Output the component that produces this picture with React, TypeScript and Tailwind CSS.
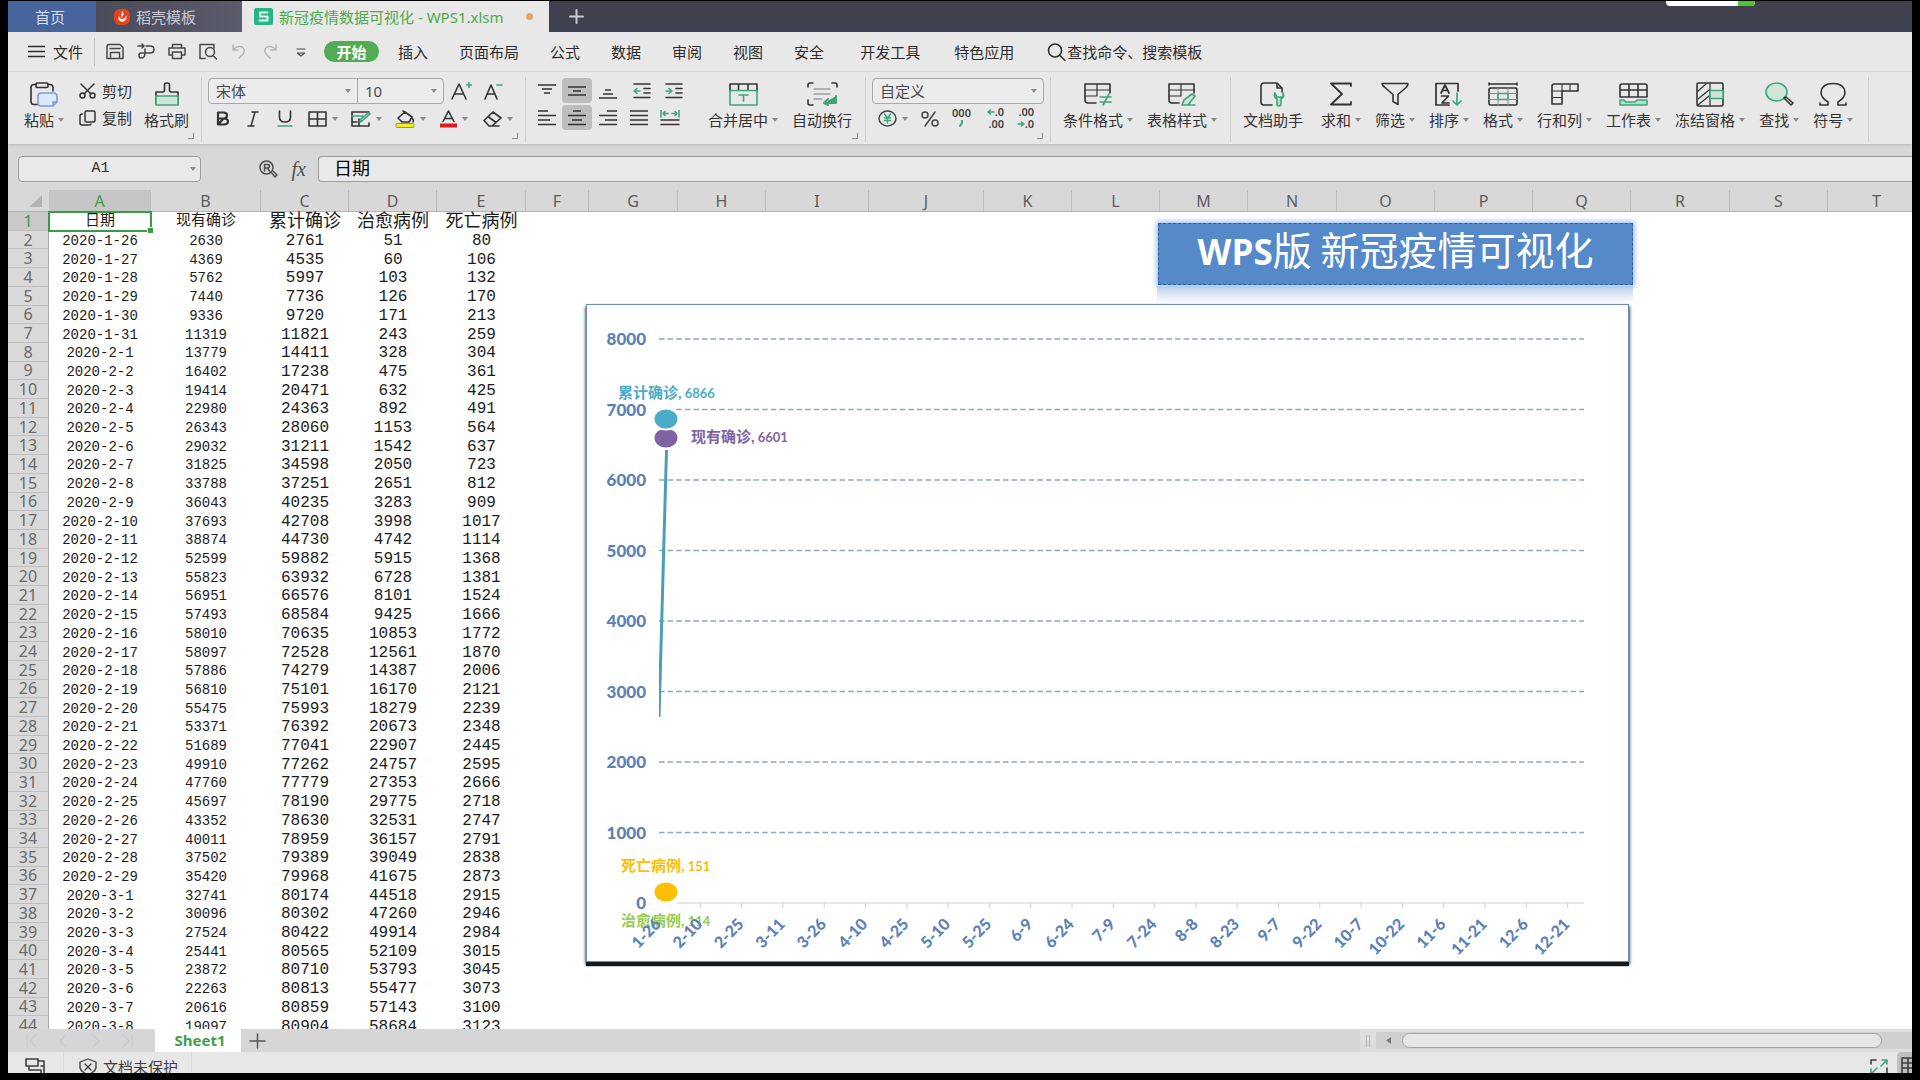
import React from "react";

type Kids = { children?: React.ReactNode };

const UI = "font-['Noto_Sans','Noto_Sans_CJK_SC',sans-serif]";

function Svg({ w, h, sw = 1.6, children }: Kids & { w: number; h: number; sw?: number }) {
  return (
    <svg
      width={w}
      height={h}
      viewBox={`0 0 ${w} ${h}`}
      fill="none"
      stroke="currentColor"
      strokeWidth={sw}
      strokeLinecap="round"
      strokeLinejoin="round"
      aria-hidden="true"
      className="shrink-0"
    >
      {children}
    </svg>
  );
}

const G = "#3fa67c";

function Caret() {
  return (
    <svg width="6" height="4" viewBox="0 0 6 4" className="shrink-0" aria-hidden="true">
      <path d="M0 0h6L3 4z" fill="#8a8a8a" />
    </svg>
  );
}

/* ---------- title tabs ---------- */

function TabBar() {
  return (
    <header className="relative flex h-[31px] shrink-0 bg-linear-to-b from-[#423f4c] to-[#3e4150] text-[15px] leading-[20px]">
      <button className="w-[88px] bg-[#47649c] pr-1 text-[#d4dcec]">首页</button>
      <button className="flex w-[146px] items-center gap-[6px] bg-linear-to-r from-[#4b4c5a] to-[#5a5b6b] pl-[18px] text-[#c9cad4]">
        <Svg w={16} h={16}>
          <rect x="0" y="0" width="16" height="16" rx="6" fill="#e8421c" stroke="none" />
          <path d="M8 2c2 2 2 4 0 6l-1 2M12 6c2 5-3 8-6 6-2-1-2-3-1-5 1 3 2 3 3 3 2 0 4-1 4-4z" fill="#fff" stroke="none" />
        </Svg>
        稻壳模板
      </button>
      <button className="flex w-[307px] items-center bg-[#e8e8e8] pl-3 text-[#4cab4f]">
        <Svg w={19} h={17} sw={2}>
          <rect width="19" height="17" rx="2" fill="#27b486" stroke="none" />
          <path d="M13.500 4.500H6v4h7.500v4H5.500" stroke="#e8fff6" />
        </Svg>
        <span className="pl-[6px] whitespace-nowrap">新冠疫情数据可视化 - WPS1.xlsm</span>
        <span className="mr-[16px] ml-auto size-[7px] rounded-full bg-[#e5a466]" />
      </button>
      <button aria-label="新建标签" className="w-14 pl-[20px] text-[#c9cad4]">
        <Svg w={15} h={15} sw={2}>
          <path d="M7.500 1v13M1 7.500h13" />
        </Svg>
      </button>
      <div className="absolute top-0 right-[157px] flex h-[5px] w-[89px] overflow-hidden rounded-b bg-white">
        <span className="ml-auto w-[17px] bg-[#4fc52c]" />
      </div>
    </header>
  );
}

/* ---------- menu ---------- */

const QUICK: { name: string; dim?: boolean; art: React.ReactNode }[] = [
  {
    name: "保存",
    art: <path d="M1 3.500Q1 1.500 3 1.500H14L17 4.500V15.500H1zM4 5.500H14M4.500 15V9.500H13.500V15" />,
  },
  {
    name: "输出为PDF",
    art: <path d="M1 3h6M5 1l2 2-2 2M9 3h4q4 0 4 3.500T13 10H4q-2 0-2 2.500T4 15q4 0 4-5V6" />,
  },
  { name: "打印", art: <path d="M4.500 5V1.500h9V5M4.500 12H1V5h16v7h-3.500M4.500 9h9v6.500h-9z" /> },
  {
    name: "打印预览",
    art: (
      <>
        <path d="M6 15.500H1v-14h14V5" />
        <circle cx="11" cy="9" r="4.500" />
        <path d="M14 12.500l3.500 3.500" />
      </>
    ),
  },
  { name: "撤销", dim: true, art: <path d="M3 2v5h5M3 7q4-5 9-3 4 3 1 7l-4 4" /> },
  { name: "恢复", dim: true, art: <path d="M15 2v5h-5M15 7q-4-5-9-3-4 3-1 7l4 4" /> },
  { name: "更多", art: <path d="M5 6h8M5.500 10h7L9 13z" strokeWidth="1.2" /> },
];

const MENUS = ["插入", "页面布局", "公式", "数据", "审阅", "视图", "安全"];

function MenuBar() {
  return (
    <nav className="flex h-10 shrink-0 items-center border-b border-[#dcdcdc] bg-[#e8e8e8] text-[15px] leading-[20px] text-[#2c2c2c]">
      <button className="ml-5 flex h-7 items-center gap-2 border-r border-[#c6c6c6] pr-[11px]">
        <Svg w={17} h={13} sw={1.500}>
          <path d="M0 1.500h17M0 6.500h17M0 11.500h17" />
        </Svg>
        文件
      </button>
      <div className="flex gap-[13px] pl-[11px]">
        {QUICK.map((q) => (
          <button key={q.name} aria-label={q.name} className={q.dim ? "text-[#b5b5b5]" : "text-[#474747]"}>
            <Svg w={18} h={17} sw={1.500}>
              {q.art}
            </Svg>
          </button>
        ))}
      </div>
      <button className="mr-[19px] ml-[14px] h-[21px] w-[55px] rounded-full bg-[#53ab54] font-bold text-white">开始</button>
      <div className="flex gap-[31px]">
        {MENUS.map((m) => (
          <button key={m}>{m}</button>
        ))}
      </div>
      <button className="ml-9">开发工具</button>
      <button className="ml-[34px]">特色应用</button>
      <button className="ml-[33px] flex items-center">
        <Svg w={20} h={18} sw={1.500}>
          <circle cx="8" cy="7.500" r="6.500" />
          <path d="M13 12.500l5 5" />
        </Svg>
        查找命令、搜索模板
      </button>
    </nav>
  );
}

/* ---------- ribbon ---------- */

function Big({ label, caret = true, children }: Kids & { label: string; caret?: boolean }) {
  return (
    <button className="flex flex-col items-center">
      <span className="flex h-[32px] items-center">{children}</span>
      <span className="flex h-[20px] items-center gap-1 whitespace-nowrap">
        {label}
        {caret && <Caret />}
      </span>
    </button>
  );
}

function Group({ className, corner = false, children }: Kids & { className: string; corner?: boolean }) {
  return (
    <div className={`relative flex h-[65px] shrink-0 border-r border-[#cfcfcf] pt-px ${className}`}>
      {children}
      {corner && (
        <span className="absolute right-[7px] bottom-[3px] size-[6px] border-r border-b border-[#8f8f8f]" aria-hidden="true" />
      )}
    </div>
  );
}

function Small({ label, on = false, caret = false, className, children }: Kids & { label: string; on?: boolean; caret?: boolean; className: string }) {
  return (
    <button
      aria-label={label}
      className={`flex h-[25px] shrink-0 items-center justify-center gap-[5px] ${on ? "rounded bg-[#bdbdbd]" : ""} ${className}`}
    >
      {children}
      {caret && <Caret />}
    </button>
  );
}

function Combo({ label, value, className }: { label: string; value: string; className: string }) {
  return (
    <label className={`flex h-[24px] items-center pr-[6px] pl-[7px] ${className}`}>
      <select aria-label={label} defaultValue={value} className="min-w-0 flex-1 appearance-none bg-transparent text-[#4a4a4a] outline-none">
        <option>{value}</option>
      </select>
      <Caret />
    </label>
  );
}

function Lines({ d }: { d: string }) {
  return (
    <Svg w={18} h={16} sw={1.600}>
      <path d={d} strokeLinecap="butt" />
    </Svg>
  );
}

function Ribbon() {
  return (
    <section
      aria-label="开始"
      className="z-10 flex h-[72px] shrink-0 overflow-hidden bg-[#e8e8e8] pt-[5px] text-[15px] leading-[20px] text-[#333] shadow-[0_1px_3px_#b5b5b5]"
    >
      <Group className="w-[194px] pl-4" corner>
        <Big label="粘贴">
          <Svg w={28} h={25}>
            <path d="M9 22.500H4q-3 0-3-3V5.500q0-3 3-3h2M18 2.500h2q3 0 3 3V9" />
            <rect x="6" y="1" width="12" height="4.500" rx="1" />
            <path d="M11 11h14l2 2v7l-4 4H11q-3 0-3-3v-7q0-3 3-3z" fill="#dbe8fa" stroke="#7e9ed0" />
            <path d="M23 24v-4h4" stroke="#7e9ed0" />
          </Svg>
        </Big>
        <div className="flex w-[75px] flex-col gap-[2px] pl-[15px]">
          <button className="flex h-[25px] items-center gap-[6px]">
            <Svg w={17} h={16} sw={1.500}>
              <path d="M2 1l10 10M15 1L5 11" />
              <circle cx="3.500" cy="12.500" r="2.500" />
              <circle cx="13.500" cy="12.500" r="2.500" />
            </Svg>
            剪切
          </button>
          <button className="flex h-[25px] items-center gap-[6px]">
            <Svg w={17} h={16} sw={1.500}>
              <rect x="6" y="1" width="10" height="11" rx="1.500" />
              <path d="M3.500 4H3q-2 0-2 2v7q0 2 2 2h7q2 0 2-1" />
            </Svg>
            复制
          </button>
        </div>
        <div className="pl-[5px]">
          <Big label="格式刷" caret={false}>
            <Svg w={26} h={24}>
              <path d="M2 22V10h7q1.500 0 1.500-2V2.500q0-1.500 2.500-1.500t2.500 1.500V8q0 2 1.500 2H24v12" />
              <path d="M2 14h22v9H2z" fill="#cfe5da" stroke={G} />
            </Svg>
          </Big>
        </div>
      </Group>

      <Group className="w-[324px] flex-col gap-[2px] pl-[6px]" corner>
        <div className="flex items-center">
          <div className="flex rounded-[4px] border border-[#a9a9a9] bg-[#ececec]">
            <Combo label="字体" value="宋体" className="w-[149px] border-r border-[#a9a9a9]" />
            <Combo label="字号" value="10" className="w-[85px]" />
          </div>
          <Small label="增大字号" className="w-[34px]">
            <Svg w={21} h={20}>
              <path d="M1 18L8 3l7 15M3.500 13h9" />
              <path d="M18 1.500v5M15.500 4h5" stroke={G} />
            </Svg>
          </Small>
          <Small label="减小字号" className="w-[30px]">
            <Svg w={19} h={20}>
              <path d="M1 18L7 4l6 14M3 13h8" />
              <path d="M13 4h5" stroke={G} />
            </Svg>
          </Small>
        </div>
        <div className="flex">
          <Small label="加粗" className="w-[29px]">
            <Svg w={14} h={15} sw={2.200}>
              <path d="M2 1.500h5.500q3.500 0 3.500 3T7.500 7.500H2M7.500 7.500q4.500 0 4.500 3t-4.500 3H2zM2 1.500v12" />
            </Svg>
          </Small>
          <Small label="倾斜" className="w-[32px]">
            <Svg w={12} h={16} sw={1.500}>
              <path d="M5 1h6M1 15h6M8 1L4 15" />
            </Svg>
          </Small>
          <Small label="下划线" className="w-[31px]">
            <Svg w={16} h={17}>
              <path d="M2.500 1v6q0 5 5.500 5t5.500-5V1" />
              <path d="M1 16h14" stroke={G} />
            </Svg>
          </Small>
          <Small label="边框" caret className="w-[45px]">
            <Svg w={19} h={16}>
              <path d="M1 1h17v14H1zM9.500 1v14M1 8h17" />
            </Svg>
          </Small>
          <Small label="绘图边框" caret className="w-[42px]">
            <Svg w={20} h={16}>
              <path d="M18 1H1v14h17v-3M8 8v7M1 11h5" />
              <path d="M1 5h11M9 11l2-1 8-7-2-1-7 6z" stroke={G} fill="#a8d3bf" />
            </Svg>
          </Small>
          <Small label="填充颜色" caret className="w-[46px]">
            <Svg w={20} h={18}>
              <path d="M3 8l7-6 7 5-3 5H7zM17 8q2 2 1 4M10 2L8 1" />
              <rect x="1" y="13.500" width="18" height="4" rx="1" fill="#f4ee1d" stroke="#9a9640" strokeWidth="1" />
            </Svg>
          </Small>
          <Small label="字体颜色" caret className="w-[42px]">
            <Svg w={17} h={18}>
              <path d="M3 11.500L8.500 1 14 11.500M5 8.500h7" />
              <rect x="0" y="13.500" width="17" height="4" fill="#dd1d20" stroke="none" />
            </Svg>
          </Small>
          <Small label="清除" caret className="w-[46px]">
            <Svg w={19} h={16}>
              <path d="M1 9.500L10 1l8 6-9 8H6zM5 5.500l8 6M9 15h7" />
            </Svg>
          </Small>
        </div>
      </Group>

      <Group className="w-[340px] pl-[5px]" corner>
        <div className="flex flex-col gap-[2px]">
          <div className="flex items-center">
            <Small label="顶端对齐" className="w-[31px]"><Lines d="M0 2h18M4 6h10M6 10h6" /></Small>
            <Small label="垂直居中" on className="w-[30px]"><Lines d="M0 4h18M5 8h8M0 12h18" /></Small>
            <Small label="底端对齐" className="w-[32px]"><Lines d="M6 7h6M4 11h10M0 15h18" /></Small>
            <Small label="减少缩进" className="w-[36px]">
              <Svg w={18} h={16}>
                <path d="M1 1h16M11 5.500h6M11 10h6M1 14.500h16" />
                <path d="M1 8h6M4 5.500L1 8l3 2.500" stroke={G} />
              </Svg>
            </Small>
            <Small label="增加缩进" className="w-[28px]">
              <Svg w={18} h={16}>
                <path d="M1 1h16M11 5.500h6M11 10h6M1 14.500h16" />
                <path d="M1 8h6M4 5.500L7 8l-3 2.500" stroke={G} />
              </Svg>
            </Small>
          </div>
          <div className="flex items-center">
            <Small label="左对齐" className="w-[31px]"><Lines d="M0 1h10M0 5.500h18M0 10h12M0 14.500h18" /></Small>
            <Small label="水平居中" on className="w-[30px]"><Lines d="M5 1h8M0 5.500h18M4 10h10M0 14.500h18" /></Small>
            <Small label="右对齐" className="w-[32px]"><Lines d="M8 1h10M0 5.500h18M6 10h12M0 14.500h18" /></Small>
            <Small label="两端对齐" className="w-[30px]"><Lines d="M0 1h18M0 5.500h18M0 10h18M0 14.500h18" /></Small>
            <Small label="分散对齐" className="w-[32px]">
              <Svg w={20} h={16}>
                <path d="M1 10h18M1 14.500h18" />
                <path d="M1 0v7M19 0v7M3 3.500h5M12 3.500h5M5 1.500l-2 2 2 2M15 1.500l2 2-2 2" stroke={G} />
              </Svg>
            </Small>
          </div>
        </div>
        <div className="flex gap-[14px] pl-5">
          <Big label="合并居中">
            <Svg w={29} h={24}>
              <path d="M1 9V2h27v7M9.500 2v6M19 2v6" />
              <path d="M1 8.500h27V23H1zM10 13h9M14.500 13v6" stroke={G} />
            </Svg>
          </Big>
          <Big label="自动换行" caret={false}>
            <Svg w={31} h={24}>
              <path d="M1 5V3q0-2 2-2h3M25 1h3q2 0 2 2v2M1 18v3q0 2 2 2h3" />
              <path d="M7 7h16M7 12h16M7 17h8" strokeWidth="1.2" stroke="#777" />
              <path d="M29 14v7H17M21 17l-4 4 4 2" stroke={G} strokeWidth="2" fill={G} />
            </Svg>
          </Big>
        </div>
      </Group>

      <Group className="w-[185px] flex-col gap-[2px] pl-[6px]" corner>
        <div className="flex w-[172px] rounded-[4px] border border-[#a9a9a9] bg-[#ececec]">
          <Combo label="数字格式" value="自定义" className="flex-1" />
        </div>
        <div className="flex items-center text-[#444]">
          <Small label="货币格式" caret className="w-[42px]">
            <Svg w={19} h={17} sw={1.500}>
              <ellipse cx="9.500" cy="8.500" rx="8.500" ry="7.500" />
              <path d="M6.500 4l3 4 3-4M9.500 8v5M6.500 8h6M6.500 10.500h6" stroke={G} />
            </Svg>
          </Small>
          <Small label="百分比" className="w-[32px]">
            <Svg w={18} h={16} sw={1.500}>
              <circle cx="4" cy="4" r="3" />
              <circle cx="14" cy="12" r="3" />
              <path d="M14 1L4 15" />
            </Svg>
          </Small>
          <button aria-label="千位分隔" className="flex h-[25px] w-[31px] flex-col items-center text-[11px] leading-[14px] font-semibold">
            000
            <Svg w={5} h={7} sw={2}>
              <path d="M3 0v3L1 6" stroke={G} />
            </Svg>
          </button>
          <button className="flex h-[25px] w-[28px] flex-col items-end pr-[1px] text-[11px] leading-[12px] font-semibold">
            <span className="flex items-center">
              <Svg w={8} h={6}>
                <path d="M7 3H1M3.500 1L1 3l2.500 2" stroke={G} />
              </Svg>
              .0
            </span>
            <span>.00</span>
          </button>
          <button className="flex h-[25px] w-[30px] flex-col items-end pr-[1px] text-[11px] leading-[12px] font-semibold">
            <span>.00</span>
            <span className="flex items-center">
              <Svg w={8} h={6}>
                <path d="M1 3h6M4.500 1L7 3 4.500 5" stroke={G} />
              </Svg>
              .0
            </span>
          </button>
        </div>
      </Group>

      <Group className="w-[180px] gap-[14px] pl-[12px]">
        <Big label="条件格式">
          <Svg w={28} h={24}>
            <path d="M12 21H4q-3 0-3-3V2h25v9" />
            <path d="M1 8h25M1 14h12M13 2v12" strokeWidth="1.200" />
            <path d="M16 15h11M16 20h11M25 12l-6 11" stroke={G} />
          </Svg>
        </Big>
        <Big label="表格样式">
          <Svg w={28} h={24}>
            <path d="M11 21H4q-3 0-3-3V2h25v9" />
            <path d="M1 8h25M1 14h12M13 2v12" strokeWidth="1.200" />
            <path d="M14 23l2-5 8-6 3 2-7 9zM15 23h12" stroke={G} fill="#cfe5da" />
          </Svg>
        </Big>
      </Group>

      <Group className="w-[638px] gap-[14px] pl-3" >
        <div className="mr-1 flex">
          <Big label="文档助手" caret={false}>
            <Svg w={26} h={25}>
              <path d="M12 23H4q-3 0-3-3V4q0-3 3-3h13l5 5v4M17 1v5h5" />
              <path d="M15 11q-2 4 2 6v6q2 2 4 0v-6q4-2 2-6v4h-6z" stroke={G} fill="#b6dccb" />
            </Svg>
          </Big>
        </div>
        <Big label="求和">
          <Svg w={24} h={24} sw={1.800}>
            <path d="M22 4V1.500H2L13 12 2 22.500h20V20" />
          </Svg>
        </Big>
        <Big label="筛选">
          <Svg w={28} h={24}>
            <path d="M1 1.500h26q0 2-2 4l-8 7v10l-5-3v-7l-8-7q-3-2-3-4z" />
          </Svg>
        </Big>
        <Big label="排序">
          <Svg w={28} h={25} sw={1.700}>
            <path d="M14 23H1V1.500h22V9" />
            <path d="M6 11l4-8 4 8M7.500 8.500h5M6.500 14h7L7 21h7" />
            <path d="M22 11v12M18 19l4 4 4-4" stroke={G} />
          </Svg>
        </Big>
        <Big label="格式">
          <Svg w={30} h={24}>
            <path d="M1 1v2M29 1v2M1 2h28" />
            <rect x="1" y="6" width="28" height="17" rx="1.500" />
            <path d="M1 11.500h28M1 17.500h28M10 6v17M20 6v17" strokeWidth="1" stroke="#888" />
            <path d="M10 11.500h10v6H10z" stroke={G} fill="#e8e8e8" />
          </Svg>
        </Big>
        <Big label="行和列">
          <Svg w={28} h={24}>
            <path d="M3 2h24v7H11v13H1V4q0-2 2-2z" />
            <path d="M11 2v7M19 2v7M1 9h10M1 15.500h10" strokeWidth="1.100" />
          </Svg>
        </Big>
        <Big label="工作表">
          <Svg w={29} h={24}>
            <path d="M1 15V4q0-2 2-2h23q2 0 2 2v11zM10 2v13M19 2v13M1 8h27" />
            <path d="M1 18h4l2 2h9l2-2h10v5H1z" stroke={G} fill="#b6dccb" />
          </Svg>
        </Big>
        <Big label="冻结窗格">
          <Svg w={28} h={25}>
            <rect x="1" y="1" width="26" height="23" rx="1.500" />
            <path d="M14 1v23M2 9l8-7M2 17l11-9M2 23l11-9" strokeWidth="1.200" />
            <path d="M14 8.500h13v8H14z" stroke={G} fill="#cfe5da" />
          </Svg>
        </Big>
        <Big label="查找">
          <Svg w={29} h={25}>
            <ellipse cx="11.500" cy="10" rx="10.500" ry="9" fill="#cfe5da" stroke={G} />
            <path d="M19 16l7 7 2-2-7-6z" />
          </Svg>
        </Big>
        <Big label="符号">
          <Svg w={28} h={25}>
            <path d="M1 21v2h8v-3q-7-4-7-10Q3 1.500 14 1.500T26 10q0 6-7 10v3h8v-2" />
          </Svg>
        </Big>
      </Group>
    </section>
  );
}

/* ---------- formula bar ---------- */

function FormulaBar() {
  return (
    <section className="flex h-[46px] shrink-0 items-center bg-[#d8d8d8] pt-[3px] pl-[10px]">
      <label className="flex h-[26px] w-[183px] items-center rounded-[4px] border border-[#9d9d9d] bg-[#e9e9e9] pr-1">
        <input
          aria-label="名称框"
          defaultValue="A1"
          className="h-5 min-w-0 flex-1 bg-transparent pt-[2px] pr-4 pl-2 text-center font-['Liberation_Mono',monospace] text-[15px] text-[#333] outline-none"
        />
        <Caret />
      </label>
      <div className="flex flex-1 items-center justify-end gap-[14px] pr-[12px] text-[#4f4f4f]">
        <button aria-label="查找">
          <Svg w={20} h={18} sw={1.500}>
            <circle cx="8.500" cy="7.500" r="6.500" />
            <path d="M6.500 11V4.500h3q2 0 2 1.700t-2 1.800h-3M9.500 8l2 3M13 12l4 5 2-2-4-4" />
          </Svg>
        </button>
        <button className="font-['Liberation_Serif',serif] text-[20px] leading-[24px] italic">fx</button>
      </div>
      <input
        aria-label="编辑栏"
        defaultValue="日期"
        className="h-[26px] w-[1594px] shrink-0 rounded-l-[4px] border border-r-0 border-[#9d9d9d] bg-[#e9e9e9] pl-[15px] text-[18px] text-black outline-none"
      />
    </section>
  );
}

/* ---------- worksheet ---------- */

const COLS: [string, string][] = [
  ["A", "w-[102px]"], ["B", "w-[110px]"], ["C", "w-[88px]"], ["D", "w-[88px]"], ["E", "w-[89px]"],
  ["F", "w-[63px]"], ["G", "w-[89px]"], ["H", "w-[88px]"], ["I", "w-[103px]"], ["J", "w-[115px]"],
  ["K", "w-[88px]"], ["L", "w-[88px]"], ["M", "w-[88px]"], ["N", "w-[89px]"], ["O", "w-[98px]"],
  ["P", "w-[98px]"], ["Q", "w-[98px]"], ["R", "w-[99px]"], ["S", "w-[98px]"], ["T", "w-[98px]"],
];

const DATA = `2020-1-26 2630 2761 51 80
2020-1-27 4369 4535 60 106
2020-1-28 5762 5997 103 132
2020-1-29 7440 7736 126 170
2020-1-30 9336 9720 171 213
2020-1-31 11319 11821 243 259
2020-2-1 13779 14411 328 304
2020-2-2 16402 17238 475 361
2020-2-3 19414 20471 632 425
2020-2-4 22980 24363 892 491
2020-2-5 26343 28060 1153 564
2020-2-6 29032 31211 1542 637
2020-2-7 31825 34598 2050 723
2020-2-8 33788 37251 2651 812
2020-2-9 36043 40235 3283 909
2020-2-10 37693 42708 3998 1017
2020-2-11 38874 44730 4742 1114
2020-2-12 52599 59882 5915 1368
2020-2-13 55823 63932 6728 1381
2020-2-14 56951 66576 8101 1524
2020-2-15 57493 68584 9425 1666
2020-2-16 58010 70635 10853 1772
2020-2-17 58097 72528 12561 1870
2020-2-18 57886 74279 14387 2006
2020-2-19 56810 75101 16170 2121
2020-2-20 55475 75993 18279 2239
2020-2-21 53371 76392 20673 2348
2020-2-22 51689 77041 22907 2445
2020-2-23 49910 77262 24757 2595
2020-2-24 47760 77779 27353 2666
2020-2-25 45697 78190 29775 2718
2020-2-26 43352 78630 32531 2747
2020-2-27 40011 78959 36157 2791
2020-2-28 37502 79389 39049 2838
2020-2-29 35420 79968 41675 2873
2020-3-1 32741 80174 44518 2915
2020-3-2 30096 80302 47260 2946
2020-3-3 27524 80422 49914 2984
2020-3-4 25441 80565 52109 3015
2020-3-5 23872 80710 53793 3045
2020-3-6 22263 80813 55477 3073
2020-3-7 20616 80859 57143 3100
2020-3-8 19097 80904 58684 3123`
  .split("\n")
  .map((r) => r.split(" "));

const HEADS = ["日期", "现有确诊", "累计确诊", "治愈病例", "死亡病例"];

function Grid() {
  return (
    <table className="h-[845px] w-[1918px] table-fixed border-separate border-spacing-0 text-center leading-[16px] whitespace-nowrap">
      <colgroup>
        <col className="w-[41px]" />
        {COLS.map(([c, w]) => (
          <col key={c} className={w} />
        ))}
      </colgroup>
      <thead>
        <tr className="h-[22px] bg-[#d8d8d8] text-[16px] text-[#5c5c5c]">
          <th scope="col" aria-label="全选" className="border-b border-[#b4b4b4] p-0">
            <svg width="13" height="12" viewBox="0 0 13 12" className="mr-[7px] ml-auto" aria-hidden="true">
              <path d="M13 0v12H0z" fill="#b3b3b3" />
            </svg>
          </th>
          {COLS.map(([c]) => (
            <th
              key={c}
              scope="col"
              className={`border-r border-b border-r-[#bdbdbd] border-b-[#b4b4b4] p-0 font-normal ${c === "A" ? "bg-[#c6c6c6] text-[#3e9b48]" : ""}`}
            >
              {c}
            </th>
          ))}
        </tr>
      </thead>
      <tbody className="font-['Liberation_Mono','Noto_Sans_CJK_SC',monospace] text-[#1c1c1c]">
        {[HEADS, ...DATA].map((row, i) => (
          <tr key={i}>
            <th
              scope="row"
              className={`border-r border-b border-r-[#a9a9a9] border-b-[#bfbfbf] p-0 font-['Noto_Sans',sans-serif] text-[16px] font-normal ${i === 0 ? "bg-[#c9c9c9] text-[#3e9b48]" : "bg-[#d9d9d9] text-[#6a6a6a]"}`}
            >
              {i + 1}
            </th>
            {row.map((v, j) => (
              <td
                key={j}
                className={`px-0 pt-[2px] pb-0 ${
                  i === 0
                    ? j === 0
                      ? "relative text-[15px] outline-2 -outline-offset-1 outline-[#3a9b45]"
                      : j === 1
                        ? "text-[15px]"
                        : "text-[18px]"
                    : j < 2
                      ? "text-[14px]"
                      : "text-[16px]"
                }`}
              >
                {v}
                {i === 0 && j === 0 && (
                  <span className="absolute -right-[2px] -bottom-[2px] size-[6px] border-t border-l border-white bg-[#3a9b45]" />
                )}
              </td>
            ))}
          </tr>
        ))}
      </tbody>
    </table>
  );
}

/* ---------- chart ---------- */

const X0 = 72;
const X1 = 997;
const Y0 = 598;
const PER_1000 = 70.5;
const TICK = 41.3;
const DAYS = [
  "1-26", "2-10", "2-25", "3-11", "3-26", "4-10", "4-25", "5-10", "5-25", "6-9", "6-24", "7-9",
  "7-24", "8-8", "8-23", "9-7", "9-22", "10-7", "10-22", "11-6", "11-21", "12-6", "12-21",
];
const LABELS = [
  { name: "累计确诊", value: 6866, x: 31, y: 93, color: "#4bacc6" },
  { name: "现有确诊", value: 6601, x: 104, y: 137, color: "#7e62a3" },
  { name: "死亡病例", value: 151, x: 34, y: 566, color: "#fbbd08" },
  { name: "治愈病例", value: 114, x: 34, y: 621, color: "#92cc50" },
];

function Chart() {
  return (
    <figure className="absolute top-[114px] left-[578px] h-[658px] w-[1043px] border border-[#6d8bb4] bg-white shadow-[0_4px_1px_#15191f,1px_2px_3px_#5d6f88,-1px_2px_3px_#7d8ea6]">
      <svg width="1041" height="656" viewBox="0 0 1041 656" role="img" aria-label="疫情折线图" className="font-['Lato','Noto_Sans_CJK_SC',sans-serif] font-bold">
        {LABELS.slice(3).map((l) => (
          <ChartLabel key={l.name} {...l} />
        ))}
        {[1, 2, 3, 4, 5, 6, 7, 8].map((k) => (
          <line key={k} x1={X0} x2={X1} y1={Y0 - k * PER_1000} y2={Y0 - k * PER_1000} stroke="#8fa6c4" strokeWidth="1.500" strokeDasharray="5.500 3.100" />
        ))}
        {[0, 1, 2, 3, 4, 5, 6, 7, 8].map((k) => (
          <text key={k} x="59" y={Y0 - k * PER_1000 + 6} textAnchor="end" fontSize="17" fontWeight="900" fill="#5b82b8">
            {k * 1000}
          </text>
        ))}
        <line x1={X0 + 18} x2={X1} y1={Y0} y2={Y0} stroke="#dedede" strokeWidth="1.500" />
        {DAYS.map((d, i) => (
          <g key={d}>
            <line x1={X0 + i * TICK} x2={X0 + i * TICK} y1={i ? Y0 : Y0 + 4} y2={Y0 + 5} stroke="#d0d0d0" />
            <text
              x={X0 + i * TICK + 3}
              y={Y0 + 22}
              transform={`rotate(-46 ${X0 + i * TICK + 3} ${Y0 + 22})`}
              textAnchor="end"
              fontSize="16"
              fontWeight="900"
              fill="#5b82b8"
            >
              {d}
            </text>
          </g>
        ))}
        <path d="M78 145h3L75 360l-1.500 52h-1.500V360z" fill="#4c9db5" />
        <ellipse cx="79" cy="133" rx="12.500" ry="10.500" fill="#7e62a3" stroke="#fff" strokeWidth="2" />
        <ellipse cx="79" cy="114" rx="12.500" ry="10.500" fill="#4baac6" stroke="#fff" strokeWidth="2" />
        <ellipse cx="79" cy="587" rx="12.500" ry="10.500" fill="#fdc000" stroke="#fff" strokeWidth="2" />
        {LABELS.slice(0, 3).map((l) => (
          <ChartLabel key={l.name} {...l} />
        ))}
      </svg>
    </figure>
  );
}

function ChartLabel({ name, value, x, y, color }: { name: string; value: number; x: number; y: number; color: string }) {
  return (
    <text x={x} y={y} fontSize="15" fill={color}>
      {name},<tspan fontSize="13"> {value}</tspan>
    </text>
  );
}

function Banner() {
  return (
    <>
      <div className="absolute top-[96px] left-[1149px] h-[18px] w-[476px] bg-linear-to-b from-[#c3d4ec] to-transparent" />
      <h1 className="absolute top-[33px] left-[1150px] flex h-[62px] w-[475px] items-center justify-center border border-dashed border-[#2f5f9f] bg-[#5589c9] pb-2 font-['Noto_Sans_CJK_SC',sans-serif] text-[39px] leading-[48px] font-normal text-white shadow-[0_0_5px_2px_#a4c4ee]">
        <span>
          <span className="font-['Open_Sans',sans-serif] text-[35px] font-bold">WPS</span>版 新冠疫情可视化
        </span>
      </h1>
    </>
  );
}

/* ---------- bottom bars ---------- */

const NAV = ["M3 2v12M12 2L6 8l6 6", "M10 2L4 8l6 6", "M5 2l6 6-6 6", "M12 2v12M3 2l6 6-6 6"];

function SheetTabs() {
  return (
    <div className="flex h-[23px] shrink-0 items-center bg-[#d6d6d6] text-[15px] leading-[20px]">
      <div className="flex w-[147px] gap-[17px] pl-[16px] text-[#cbcbcb]">
        {NAV.map((d) => (
          <button key={d} aria-label="切换工作表">
            <Svg w={15} h={16} sw={1.200}>
              <path d={d} />
            </Svg>
          </button>
        ))}
      </div>
      <button className="h-[23px] w-[86px] bg-white pb-[2px] pl-1 font-bold text-[#43a047]">Sheet1</button>
      <button aria-label="新建工作表" className="pl-2 text-[#555]">
        <Svg w={17} h={16} sw={1.500}>
          <path d="M8.500 1v14M1 8h15" />
        </Svg>
      </button>
      <div className="ml-auto flex h-[23px] w-[552px] items-center bg-[#dedede]">
        <span className="mx-[6px] h-3 w-1 border-x border-[#b5b5b5]" />
        <div role="scrollbar" aria-controls="sheet" aria-orientation="horizontal" aria-valuenow={0} className="flex h-[17px] flex-1 items-center bg-[#d0d0d0] pl-[10px]">
          <svg width="5" height="7" viewBox="0 0 5 7" aria-hidden="true">
            <path d="M5 0v7L0 3.500z" fill="#7c7c7c" />
          </svg>
          <span className="ml-[11px] h-[15px] w-[480px] rounded-full border border-[#a3a3a3] bg-[#e6e6e6]" />
        </div>
      </div>
    </div>
  );
}

function StatusBar() {
  return (
    <footer className="flex h-[21px] shrink-0 items-start overflow-hidden bg-[#e7e7e7] text-[15px] leading-[20px] text-[#3f3f3f]">
      <button aria-label="宏" className="h-[21px] w-[56px] border-r border-[#dadada] pt-[6px] pl-[17px]">
        <Svg w={21} h={18}>
          <path d="M1 1h12v7H1zM13 3h6v5M4 8v4M4 12h12v6M1 16h15M16 8h3v8" />
        </Svg>
      </button>
      <button className="flex h-[24px] w-[128px] items-center gap-[6px] border-r border-[#dadada] pt-[6px] pl-[15px] whitespace-nowrap">
        <Svg w={18} h={18} sw={1.300}>
          <path d="M9 1l8 3v6q-1 4-8 7-7-3-8-7V4zM6 6l6 6M12 6l-6 6" />
        </Svg>
        文档未保护
      </button>
      <button aria-label="全屏显示" className="ml-auto pt-[7px] pr-[9px]">
        <Svg w={18} h={16}>
          <path d="M1 5V1h5M17 9v6h-3" />
          <path d="M11 7l6-6M12 1h5v4M7 9l-6 6M1 10v5h5" stroke={G} />
        </Svg>
      </button>
      <button aria-label="普通视图" className="h-[21px] w-[15px] overflow-hidden rounded-tl bg-[#bfbfbf] pt-[5px] pl-1">
        <Svg w={20} h={18}>
          <path d="M1 1h18v16H1zM1 6h18M1 11h18M7 1v16M13 1v16" />
        </Svg>
      </button>
    </footer>
  );
}

export default function App() {
  return (
    <div className={`h-screen bg-black px-2 pt-px pb-[7px] ${UI}`}>
      <div className="flex h-full flex-col overflow-hidden">
        <TabBar />
        <MenuBar />
        <Ribbon />
        <FormulaBar />
        <main id="sheet" className="relative min-h-0 flex-1 overflow-hidden bg-white">
          <Grid />
          <Banner />
          <Chart />
        </main>
        <SheetTabs />
        <StatusBar />
      </div>
    </div>
  );
}
